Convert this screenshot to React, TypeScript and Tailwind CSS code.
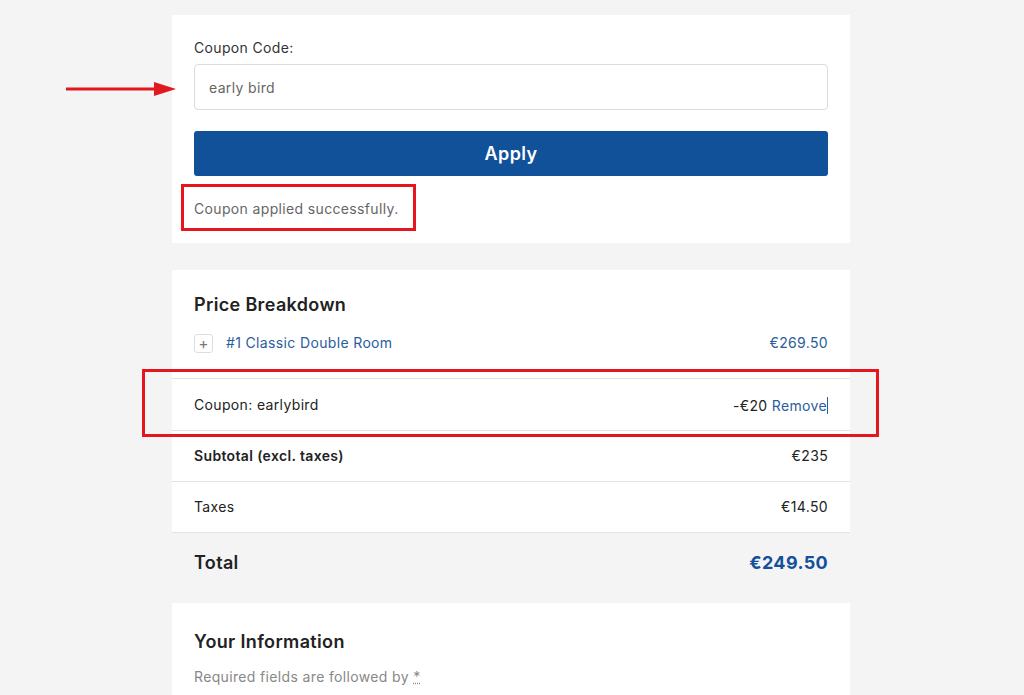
import React from "react"

const font = { fontFamily: "Inter, 'Noto Sans', sans-serif" }

function Row({
  label,
  value,
  bold,
  children,
}: {
  label: string
  value?: string
  bold?: boolean
  children?: React.ReactNode
}) {
  return (
    <div className="flex h-[51px] items-center justify-between border-t border-[#e3e3e3] px-[22px] text-sm text-[#222]">
      <span className={bold ? "font-semibold" : ""}>{label}</span>
      <span>
        {value}
        {children}
      </span>
    </div>
  )
}

export default function App() {
  return (
    <div
      className="relative min-h-[695px] bg-[#f4f4f4] pt-[15px] tracking-[0.35px]"
      style={font}
    >
      <div className="ml-[172px] w-[678px]">
        {/* coupon card */}
        <div className="bg-white px-[22px] pt-[23px] pb-[24px]">
          <div className="text-sm text-[#333]">Coupon Code:</div>
          <input
            readOnly
            value="early bird"
            className="mt-[6px] h-[46px] w-full rounded-[4px] border border-[#dcdcdc] px-[14px] text-sm tracking-[0.35px] text-[#666] outline-none"
          />
          <button className="mt-[21px] h-[45px] w-full rounded-[3px] bg-[#11519a] text-lg font-semibold text-white">
            Apply
          </button>
          <div className="mt-[23px] text-sm text-[#666]">
            Coupon applied successfully.
          </div>
        </div>

        {/* price breakdown */}
        <div className="mt-[27px] bg-white">
          <div className="px-[22px] pt-[21px] pb-[25px]">
            <h2 className="text-lg font-semibold text-[#222]">
              Price Breakdown
            </h2>
            <div className="mt-[14px] flex items-center justify-between text-sm text-[#2a5d9c]">
              <div className="flex items-center gap-[13px]">
                <span className="flex h-[19px] w-[19px] items-center justify-center rounded-[3px] border border-[#dedede] text-[15px] leading-none tracking-normal text-[#777]">
                  +
                </span>
                <span>#1 Classic Double Room</span>
              </div>
              <span>€269.50</span>
            </div>
          </div>
          <div className="flex h-[52px] items-center justify-between border-t border-[#e3e3e3] px-[22px] text-sm text-[#222]">
            <span>Coupon: earlybird</span>
            <span>
              -€20 <span className="text-[#2a5d9c]">Remove</span>
              <span className="inline-block h-[17px] w-px translate-y-[3px] bg-[#2a5d9c]" />
            </span>
          </div>
          <Row label="Subtotal (excl. taxes)" value="€235" bold />
          <Row label="Taxes" value="€14.50" />
        </div>

        <div className="flex h-[71px] items-start justify-between border-t border-[#e3e3e3] px-[22px] pt-[16px]">
          <span className="text-lg font-semibold text-[#222]">Total</span>
          <span className="text-lg font-bold text-[#13519a]">€249.50</span>
        </div>

        {/* your information */}
        <div className="h-[92px] bg-white px-[22px] pt-[25px]">
          <h2 className="text-lg font-semibold text-[#222]">
            Your Information
          </h2>
          <div className="mt-[11px] text-sm text-[#888]">
            Required fields are followed by{" "}
            <span className="underline decoration-dotted">*</span>
          </div>
        </div>
      </div>

      {/* annotations */}
      <svg
        className="absolute left-[64px] top-[80px]"
        width="114"
        height="18"
        viewBox="0 0 114 18"
      >
        <line x1="2" y1="9" x2="92" y2="9" stroke="#e0191f" strokeWidth="3" />
        <polygon points="90,2 112,9 90,16" fill="#e0191f" />
      </svg>
      <div className="pointer-events-none absolute left-[181px] top-[184px] h-[47px] w-[235px] border-[3px] border-[#e5161d]" />
      <div className="pointer-events-none absolute left-[142px] top-[369px] h-[68px] w-[737px] border-[3px] border-[#e5161d]" />
    </div>
  )
}
